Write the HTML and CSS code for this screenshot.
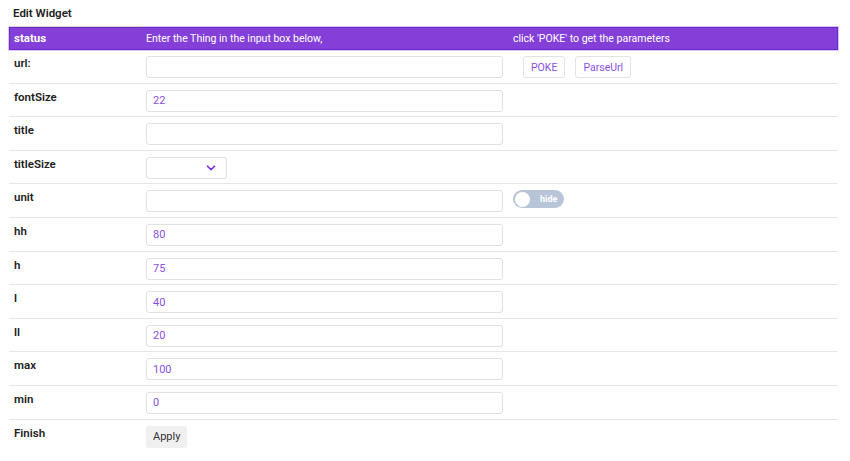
FILE: index.html
```html
<!DOCTYPE html>
<html>
<head>
<meta charset="utf-8">
<link rel="stylesheet" href="styles.css">
</head>
<body>
<div class="page">
  <div class="tabbar"><div class="tab">Edit Widget</div></div>
  <div class="table">
    <div class="row head">
      <div class="c1">status</div>
      <div class="c2">Enter the Thing in the input box below,</div>
      <div class="c3">click 'POKE' to get the parameters</div>
    </div>
    <div class="row">
      <div class="c1 lbl">url:</div>
      <div class="c2"><input class="inp" value=""></div>
      <div class="c3 btns"><button class="btn">POKE</button><button class="btn">ParseUrl</button></div>
    </div>
    <div class="row">
      <div class="c1 lbl">fontSize</div>
      <div class="c2"><input class="inp" value="22"></div>
      <div class="c3"></div>
    </div>
    <div class="row">
      <div class="c1 lbl">title</div>
      <div class="c2"><input class="inp" value=""></div>
      <div class="c3"></div>
    </div>
    <div class="row">
      <div class="c1 lbl">titleSize</div>
      <div class="c2"><div class="select"><svg class="chev" width="10" height="6" viewBox="0 0 10 6"><path d="M1.5 1.2 L5 4.6 L8.5 1.2" fill="none" stroke="#7a2fe0" stroke-width="1.6" stroke-linecap="round" stroke-linejoin="round"/></svg></div></div>
      <div class="c3"></div>
    </div>
    <div class="row">
      <div class="c1 lbl">unit</div>
      <div class="c2"><input class="inp" value=""></div>
      <div class="c3 tog"><div class="toggle"><span class="knob"></span><span class="tlabel">hide</span></div></div>
    </div>
    <div class="row">
      <div class="c1 lbl">hh</div>
      <div class="c2"><input class="inp" value="80"></div>
      <div class="c3"></div>
    </div>
    <div class="row">
      <div class="c1 lbl">h</div>
      <div class="c2"><input class="inp" value="75"></div>
      <div class="c3"></div>
    </div>
    <div class="row">
      <div class="c1 lbl">l</div>
      <div class="c2"><input class="inp" value="40"></div>
      <div class="c3"></div>
    </div>
    <div class="row">
      <div class="c1 lbl">ll</div>
      <div class="c2"><input class="inp" value="20"></div>
      <div class="c3"></div>
    </div>
    <div class="row">
      <div class="c1 lbl">max</div>
      <div class="c2"><input class="inp" value="100"></div>
      <div class="c3"></div>
    </div>
    <div class="row">
      <div class="c1 lbl">min</div>
      <div class="c2"><input class="inp" value="0"></div>
      <div class="c3"></div>
    </div>
    <div class="row last">
      <div class="c1 lbl">Finish</div>
      <div class="c2"><button class="apply">Apply</button></div>
      <div class="c3"></div>
    </div>
  </div>
</div>
</body>
</html>
```
FILE: styles.css
```css
* { box-sizing: border-box; }
body {
  margin: 0;
  font-family: Roboto, "Liberation Sans", sans-serif;
  font-size: 11px;
  color: #222;
  background: #fff;
}
.page { padding: 0 12px 0 9px; }
.tabbar {
  height: 27px;
  display: flex;
  align-items: flex-end;
}
.tab {
  width: 132px;
  height: 27px;
  padding: 6px 0 0 4px;
  font-weight: 600;
  font-size: 11.5px;
  color: #222;
  border-bottom: 1px solid #d4d4d4;
}
.table { width: 829px; }
.row {
  display: grid;
  grid-template-columns: 132px 367px 1fr;
  height: 33.6px;
  border-bottom: 1px solid #e6e6e6;
}
.row.last { border-bottom: none; }
.row > div { padding: 6px 5px 0 5px; }
.head {
  height: 23px;
  background: #853fd9;
  border: 1px solid #6a2bc6;
  box-shadow: 0 0 0 1px #d9c6f5;
  color: #fff;
  align-items: center;
  font-size: 10.5px;
}
.head > div { padding: 0 4px; line-height: 21px; }
.head .c1 { font-weight: 700; font-size: 11.5px; }
.head .c3 { padding-left: 4px; }
.lbl {
  font-weight: 600;
  font-size: 11.5px;
  line-height: 16px;
  padding-top: 5px !important;
}
.inp {
  display: block;
  width: 357px;
  height: 22px;
  border: 1px solid #e1e1e1;
  border-radius: 3px;
  padding: 0 6px;
  font: inherit;
  font-size: 11px;
  color: #8a4fe3;
  background: #fff;
  outline: none;
}
.btns { display: flex; gap: 10px; padding-left: 15px !important; }
.btn {
  height: 22px;
  padding: 0 7px;
  border: 1px solid #e3e3e3;
  border-radius: 3px;
  background: #fff;
  color: #8a4fe3;
  font: inherit;
  font-size: 10.5px;
}
.select {
  width: 81px;
  height: 22px;
  border: 1px solid #e1e1e1;
  border-radius: 3px;
  display: flex;
  align-items: center;
  justify-content: flex-end;
  padding-right: 10px;
}
.tog { padding-top: 6px !important; }
.toggle {
  width: 51px;
  height: 18px;
  border-radius: 9px;
  background: #b8c4d8;
  display: flex;
  align-items: center;
  padding-left: 2px;
}
.knob {
  width: 15px;
  height: 15px;
  border-radius: 50%;
  background: #fff;
}
.tlabel {
  color: #fff;
  font-size: 9px;
  font-weight: 700;
  margin-left: 10px;
}
.apply {
  height: 22px;
  padding: 0 7px;
  border: none;
  border-radius: 3px;
  background: #f0f0f0;
  color: #333;
  font: inherit;
  font-size: 11px;
}
```
